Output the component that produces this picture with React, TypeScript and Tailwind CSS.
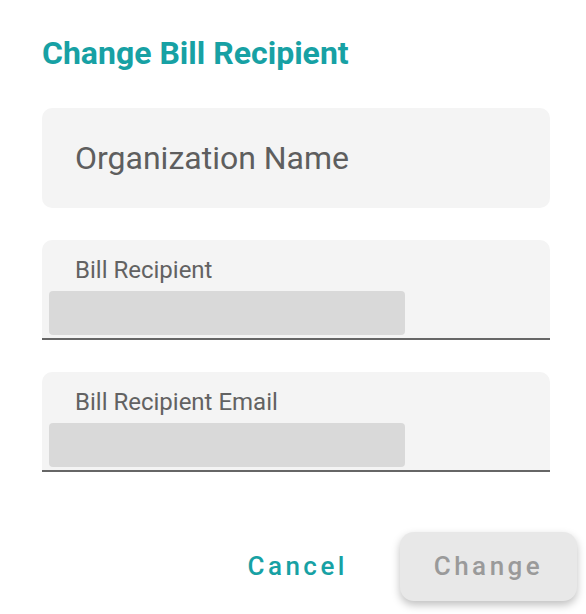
import React from 'react';

const Field: React.FC<{ label: string }> = ({ label }) => (
  <div className="h-[100px] w-full bg-[#f4f4f4] rounded-t-[10px] border-b-2 border-[#666666] flex flex-col">
    <span className="pl-[33px] pt-[16px] text-[24px] leading-[28px] text-[#626262]">{label}</span>
    <div className="ml-[7px] mt-[7px] h-[44px] w-[356px] rounded-[4px] bg-[#d9d9d9]"></div>
  </div>
);

export default function App() {
  return (
    <div className="w-[586px] h-[614px] bg-white flex flex-col" style={{ fontFamily: 'Roboto, "Liberation Sans", sans-serif' }}>
      <h2 className="pl-[42px] pt-[34px] text-[32px] leading-[38px] font-bold text-[#17a1a4]">Change Bill Recipient</h2>

      <div className="ml-[42px] w-[508px] mt-[36px] flex flex-col gap-[32px]">
        <div className="h-[100px] w-full bg-[#f4f4f4] rounded-[10px] flex items-center pl-[33px]">
          <span className="text-[32px] text-[#5e5e5e]">Organization Name</span>
        </div>
        <Field label="Bill Recipient" />
        <Field label="Bill Recipient Email" />
      </div>

      <div className="mt-[60px] flex justify-end items-center pr-[9px] gap-[52px]">
        <button className="text-[26px] font-medium tracking-[3.5px] text-[#17a1a4]">Cancel</button>
        <button className="w-[177px] h-[69px] rounded-[14px] bg-[#e8e8e8] text-[26px] font-medium tracking-[3.5px] text-[#9a9a9a] shadow-[0_4px_8px_rgba(0,0,0,0.25)]">Change</button>
      </div>
    </div>
  );
}
